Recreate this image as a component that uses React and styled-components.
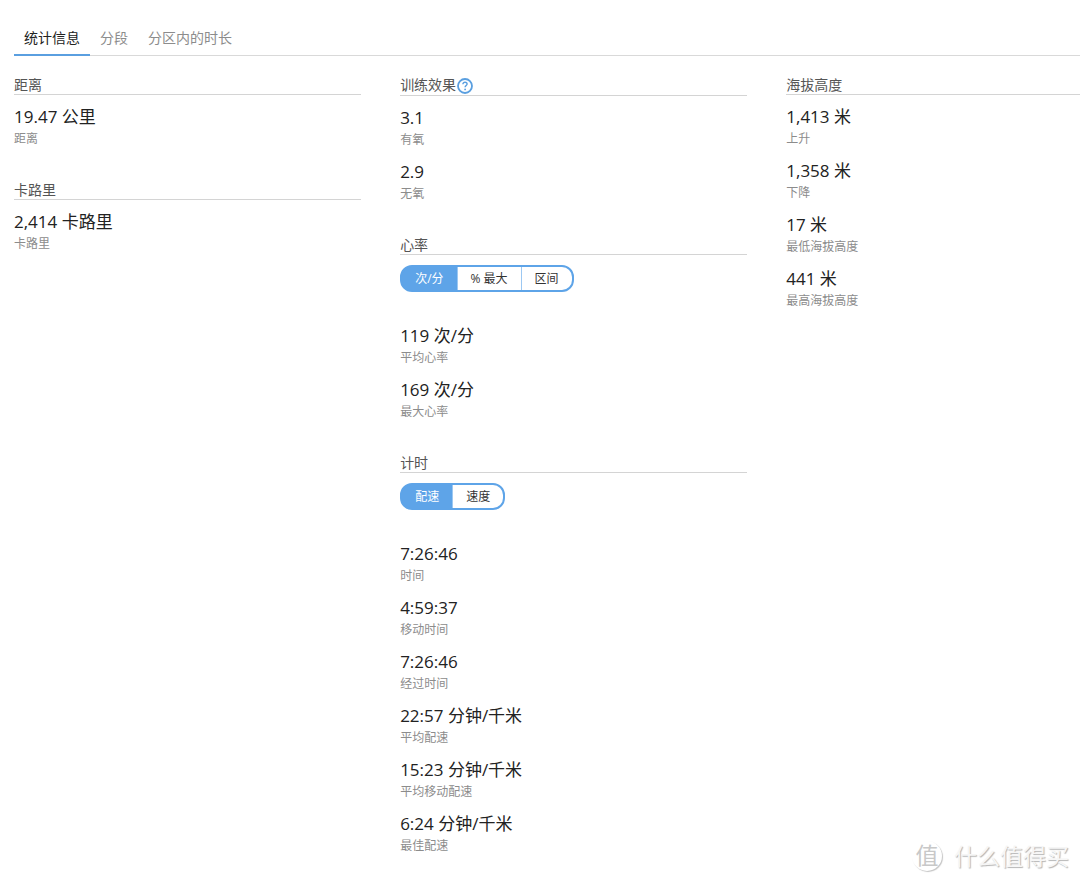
import React, { useState } from "react";
import styled, { createGlobalStyle } from "styled-components";

const GlobalStyle = createGlobalStyle`
*, *::before, *::after {
    box-sizing: border-box;
}

body {
    margin: 0;
    background: #fff;
    color: #222;
    font-family: "Open Sans", "Noto Sans CJK SC", sans-serif;
}

button {
    margin: 0;
    font: inherit;
    cursor: pointer;
}
`;

const tabs = ["统计信息", "分段", "分区内的时长"];

const columns = [
    [
        {title: "距离", stats: [["19.47 公里", "距离"]]},
        {title: "卡路里", stats: [["2,414 卡路里", "卡路里"]]},
    ],
    [
        {title: "训练效果", help: true, stats: [["3.1", "有氧"], ["2.9", "无氧"]]},
        {
            title: "心率",
            options: ["次/分", "% 最大", "区间"],
            stats: [["119 次/分", "平均心率"], ["169 次/分", "最大心率"]],
        },
        {
            title: "计时",
            options: ["配速", "速度"],
            stats: [
                ["7:26:46", "时间"],
                ["4:59:37", "移动时间"],
                ["7:26:46", "经过时间"],
                ["22:57 分钟/千米", "平均配速"],
                ["15:23 分钟/千米", "平均移动配速"],
                ["6:24 分钟/千米", "最佳配速"],
            ],
        },
    ],
    [
        {
            title: "海拔高度",
            stats: [
                ["1,413 米", "上升"],
                ["1,358 米", "下降"],
                ["17 米", "最低海拔高度"],
                ["441 米", "最高海拔高度"],
            ],
        },
    ],
];

export default function App() {
    const [tab, setTab] = useState(0);

    return (
        <Page>
            <GlobalStyle/>
            <TabList role="tablist">
                {tabs.map((name, i) => (
                    <Tab key={name} role="tab" aria-selected={i === tab} $active={i === tab} onClick={() => setTab(i)}>
                        {name}
                    </Tab>
                ))}
            </TabList>
            <Columns>
                {columns.map((sections, i) => (
                    <Column key={i}>
                        {sections.map(section => <StatSection key={section.title} {...section}/>)}
                    </Column>
                ))}
            </Columns>
            <Watermark>
                <WatermarkBadge>值</WatermarkBadge>
                <span>什么值得买</span>
            </Watermark>
        </Page>
    )
}

function StatSection({title, help, options, stats}) {
    return (
        <section>
            <SectionHeader>
                <Title>{title}</Title>
                {help ? <HelpButton aria-label={title}><HelpIcon/></HelpButton> : null}
            </SectionHeader>
            {options ? <Toggle label={title} options={options}/> : null}
            <Stats>
                {stats.map(([value, label]) => (
                    <Stat key={label}>
                        <Label>{label}</Label>
                        <Value>{value}</Value>
                    </Stat>
                ))}
            </Stats>
        </section>
    )
}

function Toggle({label, options}) {
    const [selected, setSelected] = useState(0);

    return (
        <ToggleGroup role="group" aria-label={label}>
            {options.map((option, i) => (
                <ToggleButton key={option} aria-pressed={i === selected} $active={i === selected} onClick={() => setSelected(i)}>
                    {option}
                </ToggleButton>
            ))}
        </ToggleGroup>
    )
}

function HelpIcon() {
    return (
        <svg width="16" height="16" viewBox="0 0 16 16" fill="none" stroke="#5a9fe0" aria-hidden="true">
            <circle cx="8" cy="8" r="7" strokeWidth="1.8"/>
            <path d="M5.9 6.3C5.9 4.9 6.8 4.2 8 4.2s2.1.7 2.1 1.8c0 1.5-2 1.6-2 3.3" strokeWidth="1.4"/>
            <circle cx="8.1" cy="11.4" r=".9" fill="#5a9fe0" stroke="none"/>
        </svg>
    )
}

const Page = styled.main`
    position: relative;
    min-height: 100vh;
    padding: 22px 0 26px 14px;
`;

const TabList = styled.div`
    display: flex;
    border-bottom: 1px solid #d9d9d9;
`;

const Tab = styled.button`
    height: 34px;
    margin-bottom: -1px;
    padding: 0 10px;
    border: 0;
    border-bottom: 2px solid ${({$active}) => $active ? "#5a9fe0" : "transparent"};
    background: none;
    color: ${({$active}) => $active ? "#222" : "#8c8c8c"};
    font-size: 14px;
    line-height: 32px;
`;

const Columns = styled.div`
    display: grid;
    grid-template-columns: 13fr 13fr 11fr;
    column-gap: 39px;
    padding-top: 20px;
`;

const Column = styled.div`
    display: flex;
    flex-direction: column;
    gap: 32px;
    min-width: 0;
`;

const SectionHeader = styled.header`
    display: flex;
    align-items: flex-start;
    gap: 1px;
    margin-bottom: 10px;
    border-bottom: 1px solid #d4d4d4;
`;

const Title = styled.h2`
    margin: 0;
    color: #555;
    font-size: 14px;
    font-weight: 400;
    line-height: 18px;
`;

const HelpButton = styled.button`
    display: flex;
    padding: 2px 0 1px;
    border: 0;
    background: none;
`;

const ToggleGroup = styled.div`
    display: inline-flex;
    height: 27px;
    margin-bottom: 32px;
    border: 2px solid #5ea4e8;
    border-radius: 12px;
    background: #5ea4e8;
    overflow: hidden;
    vertical-align: top;
`;

const ToggleButton = styled.button`
    padding: 0 13px;
    border: 0;
    background: ${({$active}) => $active ? "#5ea4e8" : "#fff"};
    color: ${({$active}) => $active ? "#fff" : "#333"};
    font-size: 12px;
    line-height: 23px;

    & + & {
        border-left: 1px solid #9cc8f2;
    }
`;

const Stats = styled.dl`
    display: flex;
    flex-direction: column;
    gap: 10px;
    margin: 0;
`;

const Stat = styled.div`
    display: flex;
    flex-direction: column-reverse;
`;

const Value = styled.dd`
    margin: 0;
    font-size: 17px;
    line-height: 24px;
`;

const Label = styled.dt`
    color: #8c8c8c;
    font-size: 12px;
    line-height: 20px;
`;

const Watermark = styled.div`
    position: absolute;
    right: 11px;
    bottom: 11px;
    display: flex;
    align-items: center;
    gap: 12px;
    color: #f6f6f6;
    font-size: 23px;
    line-height: 32px;
    text-shadow: 1px 1px 1px #b4b4b4;
`;

const WatermarkBadge = styled.span`
    width: 30px;
    height: 30px;
    border-radius: 50%;
    box-shadow: 1px 1px 1px #c4c4c4;
    color: #c8c8c8;
    line-height: 28px;
    text-align: center;
    text-shadow: none;
`;
